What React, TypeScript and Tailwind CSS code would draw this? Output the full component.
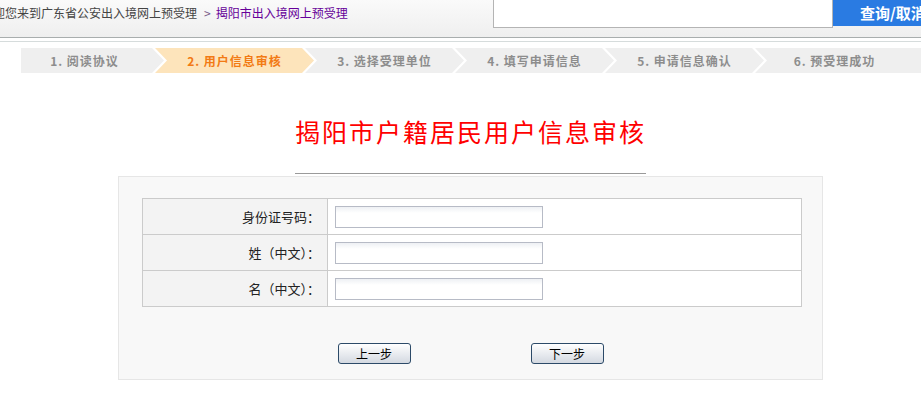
import React from 'react';

const steps = ['1. 阅读协议', '2. 用户信息审核', '3. 选择受理单位', '4. 填写申请信息', '5. 申请信息确认', '6. 预受理成功'];

const fields = ['身份证号码：', '姓（中文）：', '名（中文）：'];

const cjk = { fontFamily: '"Noto Sans CJK SC", "Liberation Sans", sans-serif' };

const Step: React.FC<{ label: string; index: number; active: boolean; last: boolean }> = ({ label, index, active, last }) => {
  const clip = last
    ? 'polygon(0 0, 100% 0, 100% 100%, 0 100%, 12px 50%)'
    : index === 0
      ? 'polygon(0 0, 147px 0, 159px 50%, 147px 100%, 0 100%)'
      : 'polygon(0 0, 147px 0, 159px 50%, 147px 100%, 0 100%, 12px 50%)';
  return (
    <div
      className={`h-[25px] shrink-0 ${last ? 'w-[180px]' : 'w-[162px]'} ${index === 0 ? '' : '-ml-[12px]'} ${
        active ? 'bg-[#fde4bb] text-[#f27a14]' : 'bg-[#efefef] text-[#8d8d8d]'
      }`}
      style={{ clipPath: clip }}
    >
      <div className="w-[159px] pl-[12px] pr-[12px] h-full flex items-center justify-center text-[12px] font-bold tracking-[1px] whitespace-nowrap">
        {label}
      </div>
    </div>
  );
};

const App: React.FC = () => {
  return (
    <div className="w-[921px] h-[401px] overflow-hidden bg-white text-[#333]" style={cjk}>
      {/* Header */}
      <div className="h-[38px] border-b border-[#a9aeae] bg-gradient-to-b from-[#fafafa] to-[#efefef] flex items-start">
        <div className="flex-1 min-w-0 pt-[5px] text-[12px] leading-[16px] whitespace-nowrap -ml-[19px]">
          <span className="text-[#444]">欢迎您来到广东省公安出入境网上预受理</span>
          <span className="text-[#7a5c8a] ml-[7px] mr-[5px]">&gt;</span>
          <span className="text-[#660099]">揭阳市出入境网上预受理</span>
        </div>
        <input className="w-[340px] h-[29px] -mt-px shrink-0 bg-white border border-[#b4b4b4] outline-none" />
        <button className="w-[88px] h-[26px] shrink-0 bg-[#2a7be2] text-white text-[15px] font-bold whitespace-nowrap overflow-hidden text-left pl-[27px] leading-[26px]">
          查询/取消
        </button>
      </div>
      <div className="h-[3px]" />
      <div className="h-px bg-[#d6dcdc]" />

      {/* Steps */}
      <div className="mt-[6px] ml-[21px] overflow-hidden">
        <div className="flex -ml-[16px]">
          {steps.map((s, i) => (
            <Step key={s} label={s} index={i} active={i === 1} last={i === steps.length - 1} />
          ))}
        </div>
      </div>

      {/* Content */}
      <div className="ml-[118px] w-[705px]">
        <h1 className="mt-[43px] text-center text-[25px] leading-[30px] tracking-[2px] text-[#ff0000] font-normal">
          揭阳市户籍居民用户信息审核
        </h1>
        <div className="mt-[27px] mx-auto w-[351px] h-px bg-[#9a9a9a]" />

        <div className="mt-[2px] border border-[#e6e6e6] bg-[#f8f8f8] pt-[21px] pb-[15px] pl-[23px]">
          <table className="w-[660px] border-collapse">
            <tbody>
              {fields.map((f) => (
                <tr key={f}>
                  <td className="w-[185px] h-[36px] border border-[#cbcbcb] bg-[#f3f3f3] text-right pr-[7px] text-[13px] text-[#222]">
                    {f}
                  </td>
                  <td className="h-[36px] border border-[#cbcbcb] bg-white pl-[7px]">
                    <input className="block w-[208px] h-[22px] border border-[#b7bbc6] bg-gradient-to-b from-[#eef0f4] to-white to-[30%] outline-none" />
                  </td>
                </tr>
              ))}
            </tbody>
          </table>

          <div className="mt-[36px] flex justify-center gap-[120px] pr-[23px]">
            {['上一步', '下一步'].map((b) => (
              <button
                key={b}
                className="w-[73px] h-[21px] rounded-[3px] border border-[#2c4a68] bg-gradient-to-b from-white to-[#d4d9e1] text-[12px] leading-[19px] text-black"
              >
                {b}
              </button>
            ))}
          </div>
        </div>
      </div>
    </div>
  );
};

export default App;
